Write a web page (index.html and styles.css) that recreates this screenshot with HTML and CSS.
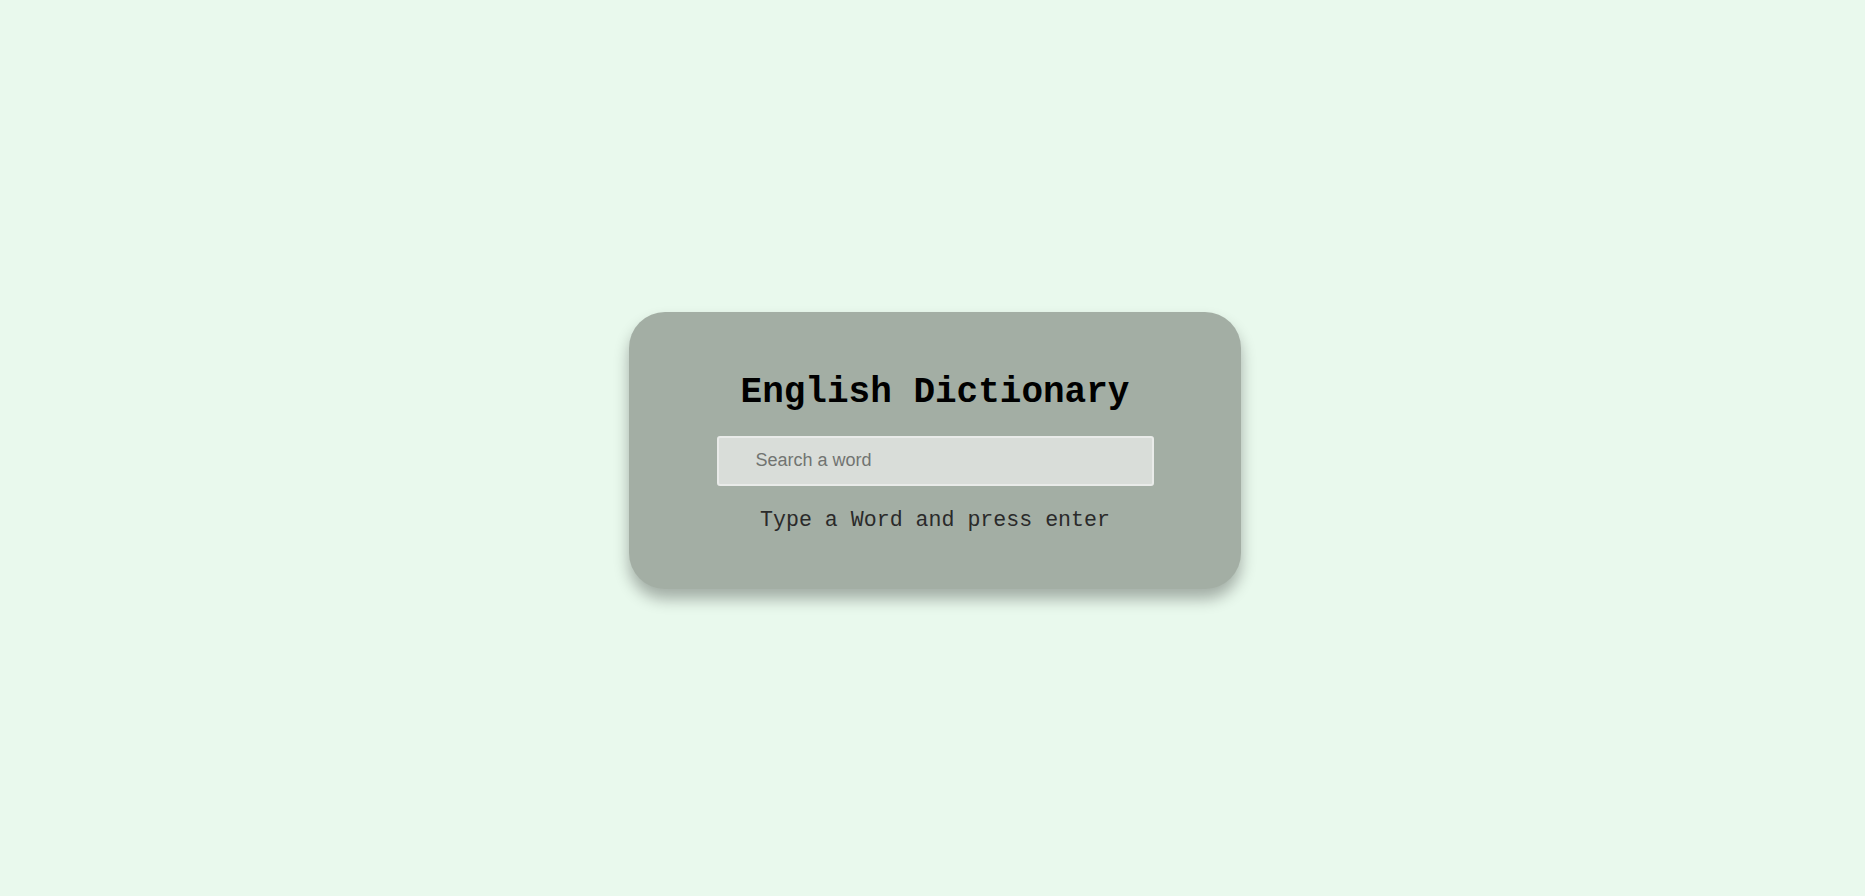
FILE: index.html
```html
<!DOCTYPE html>
<html lang="en">
<head>
<meta charset="UTF-8">
<title>English Dictionary</title>
<link rel="stylesheet" href="styles.css">
</head>
<body>
<div class="container">
  <h1 class="heading">English Dictionary</h1>
  <input class="input" type="text" placeholder="Search a word">
  <p class="info-text">Type a Word and press enter</p>
</div>
</body>
</html>
```
FILE: styles.css
```css
* {
  box-sizing: border-box;
}
body {
  margin: 0;
  min-height: 100vh;
  padding: 4px 0 0 5px;
  display: flex;
  align-items: center;
  justify-content: center;
  background: #e9f9ed;
  font-family: "Courier New", "Liberation Mono", monospace;
}
.container {
  width: 612px;
  background: #a3aea4;
  border-radius: 36px;
  box-shadow: 0 10px 15px rgba(0, 0, 0, 0.3);
  padding: 61px 0 56px;
  display: flex;
  flex-direction: column;
  align-items: center;
}
.heading {
  margin: 0 0 23px;
  font-size: 36px;
  line-height: 40px;
  font-weight: bold;
  color: #000;
}
.input {
  width: 437px;
  height: 50px;
  border: 2px solid #e9ebe9;
  border-radius: 3px;
  background: #d9ddd9;
  padding: 0 0 0 37px;
  font-family: "Liberation Sans", Arial, sans-serif;
  font-size: 18px;
  color: #222;
  outline: none;
}
.input::placeholder {
  color: #717471;
}
.info-text {
  margin: 22px 0 0;
  font-size: 21.6px;
  line-height: 25px;
  color: #2a2a2a;
}
```
